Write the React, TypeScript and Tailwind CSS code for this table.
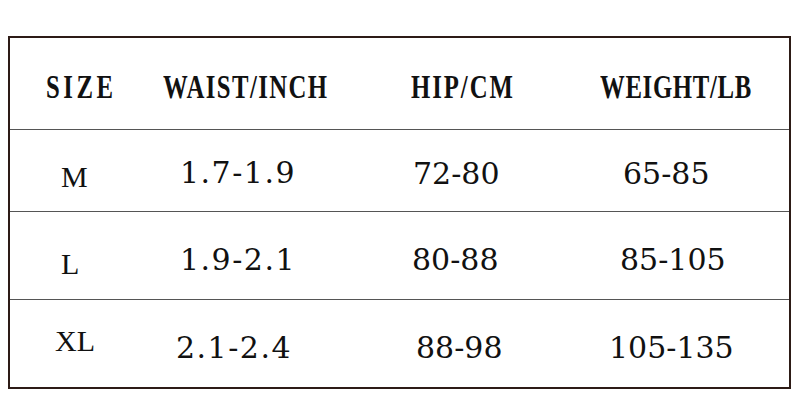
import React from "react";

const serif = { fontFamily: '"DejaVu Serif", "Liberation Serif", serif' };
const head = { fontFamily: '"Liberation Serif", "Times New Roman", serif' };

export default function App() {
  const h = "inline-block whitespace-nowrap text-[33px] leading-none font-bold origin-left scale-x-[0.75]";
  const size = "text-[30px] leading-[30px]";
  return (
    <div className="w-[800px] h-[405px] bg-white pt-[36px] pl-[8px] text-[#111]">
      <div className="w-[783px] border-2 border-[#2d1b16]">
        {/* header */}
        <div className="flex h-[92px] border-b border-[#555]" style={head}>
          <div className="w-[140px] pl-[36px] pt-[33px]">
            <span className={`${h} tracking-[4.7px]`}>SIZE</span>
          </div>
          <div className="w-[250px] pl-[13px] pt-[33px]">
            <span className={`${h} tracking-[1.9px]`}>WAIST/INCH</span>
          </div>
          <div className="w-[180px] pl-[11px] pt-[33px]">
            <span className={`${h} tracking-[2.6px]`}>HIP/CM</span>
          </div>
          <div className="w-[200px] pl-[20px] pt-[33px]">
            <span className={`${h} tracking-[0.9px]`}>WEIGHT/LB</span>
          </div>
        </div>
        {/* M */}
        <div className="flex h-[82px] border-b border-[#555]" style={serif}>
          <div className={`w-[140px] pl-[51px] pt-[32px] ${size}`} style={head}>M</div>
          <div className="w-[250px] pl-[30px] pt-[28px] text-[30px] leading-[30px] tracking-[1.5px]">1.7-1.9</div>
          <div className="w-[180px] pl-[13px] pt-[29px] text-[30px] leading-[30px]">72-80</div>
          <div className="w-[200px] pl-[43px] pt-[29px] text-[30px] leading-[30px]">65-85</div>
        </div>
        {/* L */}
        <div className="flex h-[88px] border-b border-[#555]" style={serif}>
          <div className={`w-[140px] pl-[51px] pt-[37px] ${size}`} style={head}>L</div>
          <div className="w-[250px] pl-[30px] pt-[33px] text-[30px] leading-[30px] tracking-[1.5px]">1.9-2.1</div>
          <div className="w-[180px] pl-[12px] pt-[33px] text-[30px] leading-[30px]">80-88</div>
          <div className="w-[200px] pl-[40px] pt-[33px] text-[30px] leading-[30px]">85-105</div>
        </div>
        {/* XL */}
        <div className="flex h-[87px]" style={serif}>
          <div className={`w-[140px] pl-[45px] pt-[26px] ${size}`} style={head}>XL</div>
          <div className="w-[250px] pl-[26px] pt-[33px] text-[30px] leading-[30px] tracking-[1.5px]">2.1-2.4</div>
          <div className="w-[180px] pl-[16px] pt-[33px] text-[30px] leading-[30px]">88-98</div>
          <div className="w-[200px] pl-[29px] pt-[33px] text-[30px] leading-[30px]">105-135</div>
        </div>
      </div>
    </div>
  );
}
